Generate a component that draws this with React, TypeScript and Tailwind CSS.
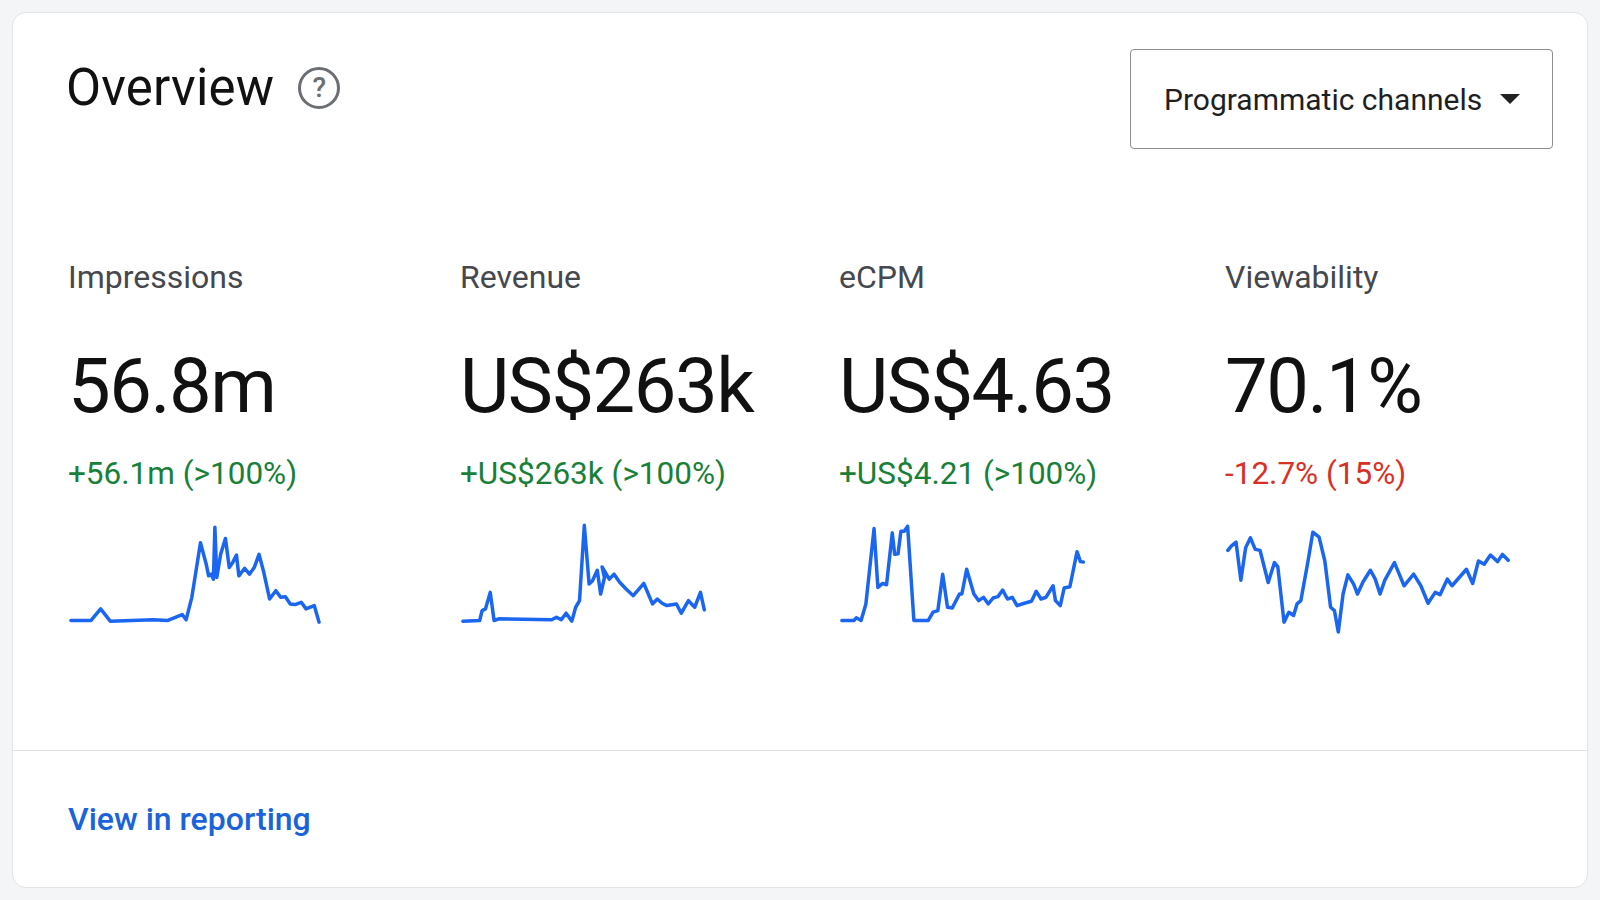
import React from "react";

type P = [number, number][];
const imp: P = [[58,370],[100,370],[120,335],[140,372],[230,368],[260,370],[290,352],[298,368],[310,300],[328,135],[340,200],[345,235],[350,230],[355,245],[358,88],[362,240],[370,170],[380,122],[388,210],[395,195],[403,172],[408,235],[420,212],[430,230],[440,210],[450,170],[460,225],[472,305],[485,280],[495,300],[505,298],[515,320],[525,322],[538,315],[548,335],[565,325],[575,375]];
const rev: P = [[885,372],[920,370],[925,340],[932,335],[942,285],[950,370],[960,365],[1070,368],[1080,360],[1090,368],[1100,348],[1112,372],[1120,330],[1128,310],[1138,82],[1148,260],[1155,250],[1165,218],[1172,290],[1180,240],[1175,208],[1190,245],[1200,230],[1212,255],[1225,275],[1240,295],[1262,258],[1280,320],[1290,305],[1300,318],[1310,325],[1330,320],[1340,348],[1355,310],[1368,330],[1380,285],[1388,338]];
const ecpm: P = [[95,370],[120,370],[125,362],[135,370],[145,320],[162,92],[170,270],[180,258],[188,262],[200,105],[205,170],[212,168],[218,100],[225,100],[232,85],[245,370],[275,370],[285,345],[295,340],[305,230],[315,330],[325,332],[340,290],[345,290],[355,215],[370,290],[380,310],[390,300],[400,320],[410,302],[420,298],[430,278],[440,305],[450,300],[460,325],[475,318],[490,312],[500,282],[510,305],[520,300],[535,265],[540,310],[550,325],[558,272],[570,268],[585,162],[592,192],[598,193]];
const view: P = [[878,158],[885,145],[895,133],[905,248],[915,150],[925,120],[935,155],[945,158],[962,255],[975,195],[982,208],[995,375],[1005,345],[1015,355],[1022,320],[1030,310],[1045,190],[1055,103],[1068,118],[1080,190],[1092,330],[1100,340],[1108,405],[1118,290],[1128,232],[1140,260],[1148,290],[1160,252],[1175,218],[1185,245],[1195,290],[1205,248],[1225,195],[1235,230],[1245,265],[1265,230],[1280,265],[1295,318],[1310,285],[1320,292],[1335,245],[1345,265],[1360,240],[1375,215],[1388,258],[1400,190],[1412,200],[1425,172],[1440,192],[1450,170],[1462,188]];

function Spark({ pts }: { pts: P }) {
  const x0 = pts[0][0] - 6;
  const x1 = pts[pts.length - 1][0] + 6;
  const w = x1 - x0;
  return (
    <svg width={w * 0.48} height={119} viewBox={`${x0} 60 ${w} 360`} preserveAspectRatio="none">
      <polyline
        points={pts.map((p) => p.join(",")).join(" ")}
        fill="none"
        stroke="#1a66f0"
        strokeWidth={3.5}
        strokeLinejoin="round"
        strokeLinecap="round"
        vectorEffect="non-scaling-stroke"
      />
    </svg>
  );
}

const metrics = [
  { label: "Impressions", value: "56.8m", delta: "+56.1m (>100%)", up: true, pts: imp },
  { label: "Revenue", value: "US$263k", delta: "+US$263k (>100%)", up: true, pts: rev },
  { label: "eCPM", value: "US$4.63", delta: "+US$4.21 (>100%)", up: true, pts: ecpm },
  { label: "Viewability", value: "70.1%", delta: "-12.7% (15%)", up: false, pts: view },
];

export default function App() {
  return (
    <div className="w-[1600px] h-[900px] bg-[#f4f5f6] pt-[12px] px-[12px]" style={{ fontFamily: "Roboto, 'Noto Sans', sans-serif" }}>
      <div className="h-[876px] bg-white rounded-[14px] border border-[#e3e4e6] flex flex-col">
        <div className="flex justify-between items-start pl-[53px] pr-[34px] pt-[36px]">
          <div className="flex items-center mt-[13px] h-[52px]">
            <span className="text-[51px] leading-[52px] text-[#111] tracking-[0.2px]">Overview</span>
            <span className="ml-[24px] w-[42px] h-[42px] rounded-full border-[3px] border-[#6b6e72] flex items-center justify-center text-[28px] font-medium text-[#6b6e72] leading-none">?</span>
          </div>
          <div className="w-[423px] h-[100px] border-[1.5px] border-[#8a8d91] rounded-[4px] flex items-center justify-between pl-[33px] pr-[32px]">
            <span className="text-[30px] text-[#1f1f1f]">Programmatic channels</span>
            <svg width="20" height="10" viewBox="0 0 20 10"><path d="M0 0h20L10 10z" fill="#222" /></svg>
          </div>
        </div>
        <div className="grid grid-cols-[392px_379px_386px_1fr] pl-[55px] mt-[110px]">
          {metrics.map((m) => (
            <div key={m.label} className="flex flex-col">
              <div className="text-[32px] leading-[36px] text-[#45484c]">{m.label}</div>
              <div className="mt-[51px] text-[76px] leading-[80px] text-[#111] tracking-[-1.5px]">{m.value}</div>
              <div className={`mt-[30px] text-[31.5px] leading-[36px] ${m.up ? "text-[#188038]" : "text-[#d93025]"}`}>{m.delta}</div>
              <div className="mt-[26px] h-[119px]">
                <Spark pts={m.pts} />
              </div>
            </div>
          ))}
        </div>
        <div className="flex-1" />
        <div className="border-t border-[#dfe0e2] h-[137px] flex items-center pl-[55px]">
          <span className="text-[32px] font-medium text-[#1a63d8]">View in reporting</span>
        </div>
      </div>
    </div>
  );
}
